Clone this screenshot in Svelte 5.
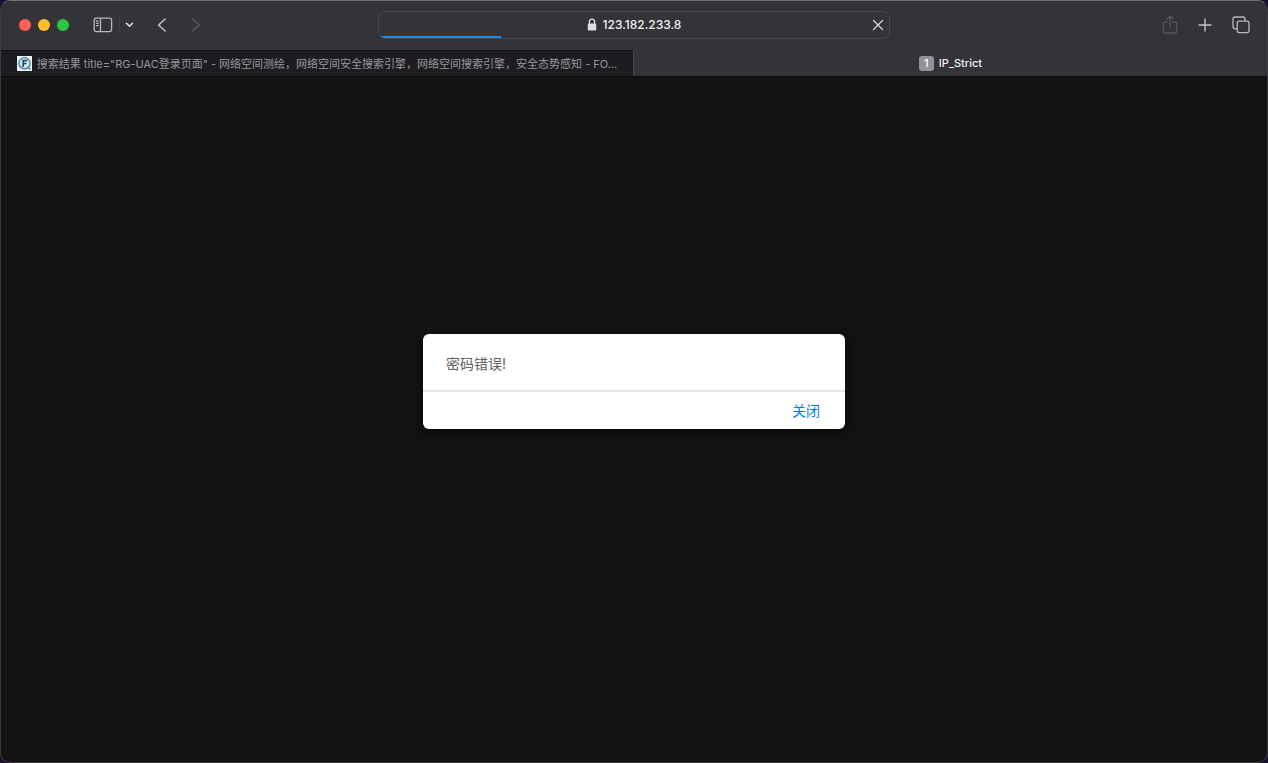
<script>
  let message = $state('密码错误!');
  let open = $state(true);
  let address = $state('123.182.233.8');
</script>

<div class="window">
  <header class="toolbar">
    <div class="side">
      <div class="lights">
        <button class="light red" aria-label="关闭窗口"></button>
        <button class="light yellow" aria-label="最小化"></button>
        <button class="light green" aria-label="全屏"></button>
      </div>
      <button class="icon sidebar" aria-label="边栏">
        <svg width="20" height="16" viewBox="0 0 20 16" fill="none" stroke="#b9b8bc" stroke-width="1.3">
          <rect x="1.2" y="1.2" width="17.4" height="13.4" rx="2" />
          <path d="M7.5 1.5v13M3 4.2h2.6M3 6.4h2.6M3 8.6h2.6" />
        </svg>
      </button>
      <button class="icon menu" aria-label="标签页组">
        <svg width="9" height="6" viewBox="0 0 9 6" fill="none" stroke="#e2e2e4" stroke-width="1.5" stroke-linecap="round" stroke-linejoin="round">
          <path d="M1.5 1.3l3 3 3-3" />
        </svg>
      </button>
      <button class="icon back" aria-label="后退">
        <svg width="10" height="16" viewBox="0 0 10 16" fill="none" stroke="#c4c3c7" stroke-width="1.5" stroke-linecap="round" stroke-linejoin="round">
          <path d="M8.2 2L1.6 8l6.6 6" />
        </svg>
      </button>
      <button class="icon forward" aria-label="前进" disabled>
        <svg width="10" height="16" viewBox="0 0 10 16" fill="none" stroke="#59585d" stroke-width="1.5" stroke-linecap="round" stroke-linejoin="round">
          <path d="M1.6 2l6.6 6-6.6 6" />
        </svg>
      </button>
    </div>

    <div class="address">
      <label class="location">
        <svg width="10" height="13" viewBox="0 0 10 13" fill="none" aria-hidden="true">
          <path d="M2.4 6V3.7a2.6 2.6 0 0 1 5.2 0V6" stroke="#dededf" stroke-width="1.3" />
          <rect x="0.8" y="5.6" width="8.4" height="7" rx="1.2" fill="#dededf" />
        </svg>
        <input type="text" aria-label="地址" bind:value={address} />
      </label>
      <button class="icon stop" aria-label="停止载入">
        <svg width="12" height="12" viewBox="0 0 12 12" stroke="#d8d7da" stroke-width="1.3" stroke-linecap="round">
          <path d="M1.5 1.5l9 9M10.5 1.5l-9 9" />
        </svg>
      </button>
      <div class="progress"></div>
    </div>

    <div class="side actions">
      <button class="icon" aria-label="共享" disabled>
        <svg width="16" height="20" viewBox="0 0 16 20" fill="none" stroke="#56555a" stroke-width="1.3" stroke-linecap="round" stroke-linejoin="round">
          <path d="M5.2 7H3a1.8 1.8 0 0 0-1.8 1.8v7.4A1.8 1.8 0 0 0 3 18h10a1.8 1.8 0 0 0 1.8-1.8V8.8A1.8 1.8 0 0 0 13 7h-2.2M8 12V1.2M5.2 3.8L8 1.2l2.8 2.6" />
        </svg>
      </button>
      <button class="icon" aria-label="新建标签页">
        <svg width="14" height="14" viewBox="0 0 14 14" stroke="#c4c3c7" stroke-width="1.4" stroke-linecap="round">
          <path d="M7 1v12M1 7h12" />
        </svg>
      </button>
      <button class="icon" aria-label="标签页概览">
        <svg width="18" height="18" viewBox="0 0 18 18" fill="none" stroke="#b9b8bc" stroke-width="1.3" stroke-linejoin="round">
          <rect x="5.2" y="5.2" width="11.8" height="11.4" rx="2" />
          <path d="M5.2 12.8H3a2 2 0 0 1-2-2V3a2 2 0 0 1 2-2h8a2 2 0 0 1 2 2v2.2" />
        </svg>
      </button>
    </div>
  </header>

  <nav class="tabs">
    <button class="tab result">
      <svg width="15" height="15" viewBox="0 0 15 15" fill="none" aria-hidden="true">
        <rect width="15" height="15" fill="#eef0f1" />
        <circle cx="7.5" cy="7.3" r="5.6" fill="#d3e4ec" stroke="#3f7f9e" stroke-width="1.3" />
        <path d="M11 11.3l2.4 2.2" stroke="#3f7f9e" stroke-width="1.5" />
        <path d="M6.2 11V4.6h4M6.2 7.5h3.2" stroke="#1e4b68" stroke-width="1.7" />
      </svg>
      <span>搜索结果 title="RG-UAC登录页面" - 网络空间测绘，网络空间安全搜索引擎，网络空间搜索引擎，安全态势感知 - FO...</span>
    </button>
    <button class="tab current">
      <span class="badge">1</span>
      <span>IP_Strict</span>
    </button>
  </nav>

  <main></main>

  {#if open}
    <div class="overlay">
      <div class="dialog" role="alertdialog" aria-label={message}>
        <p>{message}</p>
        <footer>
          <button onclick={() => (open = false)}>关闭</button>
        </footer>
      </div>
    </div>
  {/if}
</div>

<style>
  :global(body) {
    background: #1b0f2e;
  }
  .window {
    position: relative;
    box-sizing: border-box;
    display: flex;
    flex-direction: column;
    min-height: 100vh;
    overflow: hidden;
    border: 1px solid #3c3c3e;
    border-top-color: #717174;
    border-radius: 10px;
    background: #131313;
    font-family: Inter, "Noto Sans CJK SC", sans-serif;
  }
  button {
    padding: 0;
    border: 0;
    background: none;
    font: inherit;
    color: inherit;
  }
  .toolbar {
    box-sizing: border-box;
    display: grid;
    grid-template-columns: 1fr minmax(0, 512px) 1fr;
    align-items: center;
    height: 49px;
    padding-bottom: 2px;
    background: #343338;
  }
  .side {
    display: flex;
    align-items: center;
    min-width: 0;
  }
  .lights {
    display: flex;
    gap: 7px;
    padding-left: 18px;
  }
  .light {
    width: 12px;
    height: 12px;
    border-radius: 50%;
  }
  .red { background: #ff5f57; }
  .yellow { background: #febc2e; }
  .green { background: #28c840; }
  .icon {
    display: flex;
    flex: none;
    align-items: center;
    justify-content: center;
  }
  .sidebar { margin-left: 24px; }
  .menu {
    height: 16px;
    margin-left: 6px;
    padding-left: 5px;
    border-left: 1px solid #424146;
  }
  .back { margin-left: 23px; }
  .forward { margin-left: 24px; }
  .actions {
    justify-content: flex-end;
    gap: 20px;
    padding-right: 17px;
  }
  .address {
    position: relative;
    box-sizing: border-box;
    display: flex;
    align-items: center;
    height: 28px;
    padding: 0 5px;
    overflow: hidden;
    border: 1px solid #48474c;
    border-radius: 7px;
  }
  .location {
    display: flex;
    flex: 1;
    align-items: center;
    justify-content: center;
    gap: 6px;
    padding-left: 12px;
  }
  .location input {
    field-sizing: content;
    padding: 0;
    border: 0;
    outline: 0;
    background: none;
    color: #f1f1f2;
    font: 500 12px/16px Inter, sans-serif;
  }
  .progress {
    position: absolute;
    bottom: 0;
    left: 0;
    width: 24%;
    height: 2px;
    background: #2388d9;
  }
  .tabs {
    display: grid;
    grid-template-columns: 1fr 1fr;
    height: 27px;
    border-bottom: 1px solid #0b0b0b;
    box-sizing: border-box;
  }
  .tab {
    display: flex;
    align-items: center;
    justify-content: center;
    gap: 5px;
    min-width: 0;
    font-size: 11px;
    line-height: 16px;
    white-space: nowrap;
  }
  .tab svg { flex: none; }
  .result {
    border-top: 1px solid #111013;
    border-right: 1px solid #48474c;
    background: #1e1c21;
    color: #98979b;
  }
  .current {
    background: #343338;
    color: #f1f1f2;
    font-weight: 500;
  }
  .badge {
    width: 15px;
    height: 15px;
    border-radius: 3px;
    background: #92919c;
    color: #fff;
    line-height: 15px;
    text-align: center;
  }
  main { flex: 1; }
  .overlay {
    position: absolute;
    inset: 0;
    display: flex;
    align-items: center;
    justify-content: center;
    pointer-events: none;
  }
  .dialog {
    width: 422px;
    max-width: 90%;
    border-radius: 6px;
    background: #fff;
    box-shadow: 0 3px 12px rgba(0, 0, 0, 0.6);
    pointer-events: auto;
  }
  .dialog p {
    margin: 0;
    padding: 20px 23px 16px;
    color: #606060;
    font-size: 14px;
    line-height: 20px;
  }
  .dialog footer {
    display: flex;
    justify-content: flex-end;
    padding: 9px 25px 8px;
    border-top: 2px solid #e6e6e6;
  }
  .dialog footer button {
    color: #007aff;
    font-size: 14px;
    line-height: 20px;
  }
</style>
